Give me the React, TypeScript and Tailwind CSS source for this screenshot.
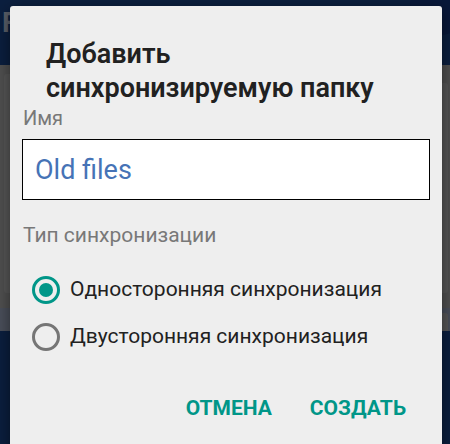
import React from "react";

export default function App() {
  return (
    <div className="relative w-[450px] h-[444px] overflow-hidden bg-[#505050]" style={{ fontFamily: "Roboto, 'Noto Sans', sans-serif" }}>
      {/* background app (dimmed) */}
      <div className="flex flex-col h-full">
        <div className="h-[65px] bg-[#0b1f3f] flex items-start relative">
          <span className="ml-[2px] mt-[6px] text-[28px] font-bold text-[#5a5f69] leading-[34px]">F</span>
          <div className="absolute right-[-20px] top-[-25px] w-[60px] h-[60px] rounded-full bg-[#08183a]" />
        </div>
        <div className="flex-1 flex flex-col">
          <div className="flex justify-between pt-[9px]">
            <div className="ml-[4px] mt-0 w-[200px] h-[219px] rounded-[3px] bg-[#575757]" />
            <div className="mr-[2px] mt-[9px] w-[200px] h-[210px] rounded-[3px] bg-[#575757]" />
          </div>
          <div className="h-[15px]" />
          <div className="h-[23px] bg-[#4a4f5a] flex justify-end">
            <div className="mr-[2px] mt-[5px] w-[200px] h-[18px] rounded-t-[3px] bg-[#575757]" />
          </div>
        </div>
        <div className="h-[113px] bg-[#0b1f3f]" />
      </div>

      {/* dialog */}
      <div className="absolute left-[10px] top-[6px] w-[432px] h-[460px] rounded-[3px] bg-[#eeeeee] shadow-[0_4px_16px_rgba(0,0,0,0.5)] flex flex-col">
        <div className="pl-[36px] pt-[31px] text-[27px] leading-[34px] font-semibold text-[#212121]">
          Добавить<br />синхронизируемую папку
        </div>
        <div className="pl-[13px] mt-[1px] text-[20px] leading-[24px] text-[#787878]">Имя</div>
        <div className="mx-[12px] mt-[9px] h-[61px] bg-white border border-black flex items-center pl-[12px]">
          <span className="text-[27px] text-[#4673b6] leading-[30px]">Old files</span>
        </div>
        <div className="pl-[13px] mt-[23px] text-[21px] leading-[24px] text-[#787878]">Тип синхронизации</div>
        <div className="mt-[19px] flex flex-col">
          <div className="flex items-center h-[47px] pl-[22px]">
            <div className="w-[28px] h-[28px] rounded-full border-[3px] border-[#009688] flex items-center justify-center">
              <div className="w-[14px] h-[14px] rounded-full bg-[#009688]" />
            </div>
            <span className="ml-[10px] text-[21px] text-[#212121]">Односторонняя синхронизация</span>
          </div>
          <div className="flex items-center h-[47px] pl-[22px]">
            <div className="w-[28px] h-[28px] rounded-full border-[3px] border-[#757575]" />
            <span className="ml-[10px] text-[21px] text-[#212121]">Двусторонняя синхронизация</span>
          </div>
        </div>
        <div className="flex justify-end mt-[36px] pr-[36px] gap-[38px] leading-[24px]">
          <span className="text-[21px] font-bold text-[#009688]">ОТМЕНА</span>
          <span className="text-[21px] font-bold text-[#009688]">СОЗДАТЬ</span>
        </div>
      </div>
    </div>
  );
}
